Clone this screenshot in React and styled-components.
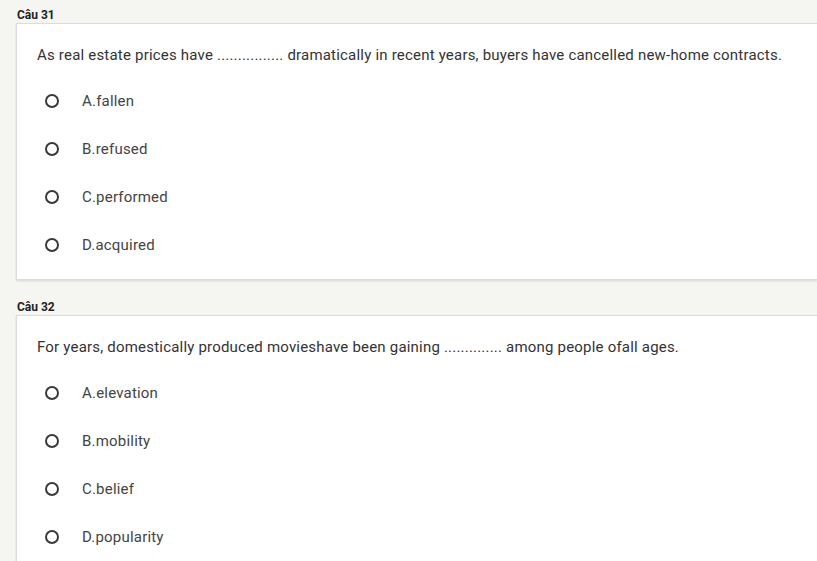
import styled, { createGlobalStyle } from "styled-components";

const Global = createGlobalStyle`
    body{
        margin: 0;
        background: #f5f5f2;
        font-family: Roboto, "Liberation Sans", sans-serif;
    }
`

const Page = styled.div`
    height: 100vh;
    overflow: hidden;
    padding: 8px 0 0 16px;
    box-sizing: border-box;
`

const Title = styled.div`
    font-size: 12px;
    font-weight: 700;
    line-height: 14px;
    color: #222;
    padding-left: 1px;
    margin-bottom: 1px;
`

const Card = styled.div`
    background: #fff;
    border: 1px solid #dcdcdc;
    border-right: none;
    box-shadow: 0 1px 2px rgba(0,0,0,0.12);
    padding: 21px 0 10px 20px;
    margin-bottom: 20px;
`

const Question = styled.p`
    margin: 0 0 12px 0;
    font-size: 15px;
    line-height: 20px;
    letter-spacing: 0.2px;
    color: #333;
    white-space: nowrap;
`

const Option = styled.label`
    display: flex;
    align-items: center;
    height: 48px;
    padding-left: 8px;
    font-size: 15px;
    letter-spacing: 0.2px;
    color: #444;
`

const Radio = styled.span`
    width: 10px;
    height: 10px;
    border: 2px solid #3a3a3a;
    border-radius: 50%;
    margin-right: 23px;
`

const questions = [
    {
        title: "Câu 31",
        text: "As real estate prices have ................ dramatically in recent years, buyers have cancelled new-home contracts.",
        options: ["A.fallen", "B.refused", "C.performed", "D.acquired"],
    },
    {
        title: "Câu 32",
        text: "For years, domestically produced movieshave been gaining .............. among people ofall ages.",
        options: ["A.elevation", "B.mobility", "C.belief", "D.popularity"],
    },
]

const App = () => {
    return (
        <Page>
            <Global />
            {questions.map(q => (
                <div key={q.title}>
                    <Title>{q.title}</Title>
                    <Card>
                        <Question>{q.text}</Question>
                        {q.options.map(o => (
                            <Option key={o}>
                                <Radio />
                                {o}
                            </Option>
                        ))}
                    </Card>
                </div>
            ))}
        </Page>
    )
}

export default App
